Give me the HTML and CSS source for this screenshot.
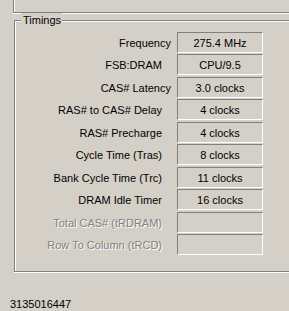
FILE: index.html
```html
<!DOCTYPE html>
<html lang="en">
<head>
  <meta charset="UTF-8" />
  <title>Timings</title>
  <link rel="stylesheet" href="styles.css">
</head>
<body>
  <div class="prev-frame"></div>

  <fieldset class="group">
    <legend>Timings</legend>
    <div class="rows">
      <label class="wide">Frequency</label>
      <div class="value">275.4 MHz</div>

      <label>FSB:DRAM</label>
      <div class="value">CPU/9.5</div>

      <label class="wide">CAS# Latency</label>
      <div class="value">3.0 clocks</div>

      <label>RAS# to CAS# Delay</label>
      <div class="value">4 clocks</div>

      <label>RAS# Precharge</label>
      <div class="value">4 clocks</div>

      <label>Cycle Time (Tras)</label>
      <div class="value">8 clocks</div>

      <label>Bank Cycle Time (Trc)</label>
      <div class="value">11 clocks</div>

      <label>DRAM Idle Timer</label>
      <div class="value">16 clocks</div>

      <label class="disabled">Total CAS# (tRDRAM)</label>
      <div class="value"></div>

      <label class="disabled">Row To Column (tRCD)</label>
      <div class="value"></div>
    </div>
  </fieldset>

  <div class="serial">3135016447</div>
</body>
</html>
```

FILE: styles.css
```css
body {
  margin: 0;
  width: 289px;
  height: 311px;
  overflow: hidden;
  background: #d4d0c8;
  color: #000;
  font-family: "Liberation Sans", Arial, sans-serif;
  font-size: 11px;
}
.prev-frame {
  margin-left: 13px;
  height: 12px;
  border-left: 1px solid #808080;
  border-bottom: 1px solid #808080;
  box-shadow: inset 1px 0 0 #fff, 0 1px 0 #fff;
}
.group {
  margin: 0 0 0 14px;
  padding: 4px 0 16px 0;
  min-width: 0;
  border: 1px solid #808080;
  border-right: none;
  box-shadow: inset 1px 1px 0 #fff, 0 1px 0 #fff;
}
.group legend {
  margin-left: 6px;
  padding: 0 1px 0 2px;
  line-height: 15px;
  background: #d4d0c8;
}
.rows {
  display: grid;
  grid-template-columns: 156px 86px;
  grid-auto-rows: 21px;
  column-gap: 6px;
  row-gap: 1.45px;
}
.rows label {
  padding: 1px 9px 0 0;
  line-height: 20px;
  text-align: right;
  white-space: nowrap;
}
.rows label.wide {
  padding-right: 0;
}
.rows label.disabled {
  color: #808080;
  text-shadow: 1px 1px 0 #fff;
}
.value {
  box-sizing: border-box;
  padding-top: 1px;
  line-height: 18px;
  text-align: center;
  border-top: 1px solid #808080;
  border-left: 1px solid #808080;
  border-bottom: 1px solid #fff;
  border-right: 1px solid #fff;
}
.serial {
  margin-top: 26px;
  padding-left: 10px;
  line-height: 13px;
}
```
